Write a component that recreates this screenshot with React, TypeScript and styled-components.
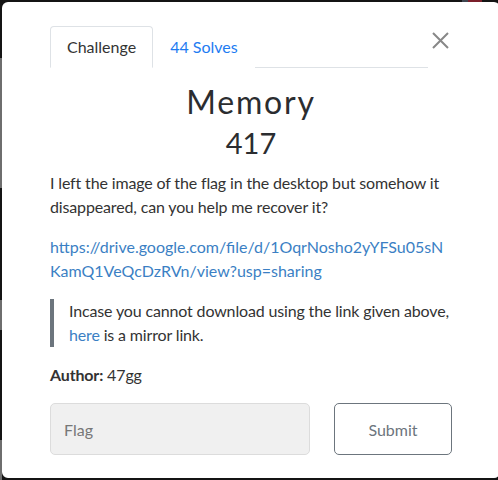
import React from "react";
import styled, { createGlobalStyle } from "styled-components";

const Global = createGlobalStyle`
  html, body { margin: 0; padding: 0; }
  body {
    width: 498px;
    height: 480px;
    overflow: hidden;
    font-family: Lato, "Open Sans", sans-serif;
    color: #212529;
    background:
      linear-gradient(to right, #3e4650 0 6px, #7a1f2a 6px 20px, #141414 20px) 462px 0 / 36px 2px no-repeat,
      linear-gradient(to bottom,
        #141414 0 58px, #6e6e6e 58px 188px, #141414 188px 300px,
        #6e6e6e 300px 330px, #141414 330px 440px, #6e6e6e 440px) 0 0 / 2px 480px no-repeat,
      #141414;
  }
`;

const Stage = styled.div`
  padding: 2px 0 0 2px;
`;

const Modal = styled.div`
  width: 498px;
  height: 476px;
  box-sizing: border-box;
  background: #fff;
  border-radius: 6px;
  padding: 24px 48px 0 48px;
`;

const Header = styled.div`
  display: flex;
  align-items: flex-start;
`;

const Tabs = styled.nav`
  flex: 0 0 378px;
  display: flex;
  border-bottom: 1px solid #dee2e6;
`;

const Tab = styled.a<{ $active?: boolean }>`
  display: block;
  padding: 8px 16px;
  line-height: 24px;
  font-size: 16px;
  margin-bottom: -1px;
  border: 1px solid ${(p) => (p.$active ? "#dee2e6" : "transparent")};
  border-bottom-color: ${(p) => (p.$active ? "#fff" : "transparent")};
  border-radius: 4px 4px 0 0;
  background: #fff;
  color: ${(p) => (p.$active ? "#333" : "#1e7cf2")};
  text-decoration: none;
`;

const Close = styled.button`
  margin: 4px 0 0 2px;
  width: 20px;
  height: 20px;
  padding: 0;
  border: 0;
  background: transparent;
  display: flex;
  align-items: center;
  justify-content: center;
`;

const Title = styled.h2`
  margin: 14px 0 0;
  text-align: center;
  font-size: 32px;
  line-height: 40px;
  font-weight: 400;
  letter-spacing: 1.8px;
  color: #2b2d30;
`;

const Value = styled.h3`
  margin: 4px 0 0;
  text-align: center;
  font-size: 29px;
  line-height: 34px;
  font-weight: 400;
  color: #2b2d30;
`;

const Body = styled.div`
  margin-top: 11px;
  font-size: 16px;
  line-height: 24px;
  letter-spacing: -0.15px;
  color: #333;
`;

const Para = styled.p`
  margin: 0 0 16px;
`;

const Link = styled.a`
  color: #3b7fc4;
  text-decoration: none;
  word-break: break-all;
`;

const UrlLink = styled(Link)`
  letter-spacing: 0;
`;

const Quote = styled.blockquote`
  margin: 0 0 16px;
  padding: 0 0 0 15px;
  border-left: 4px solid #6c757d;
`;

const Author = styled.p`
  margin: 13px 0 0;
  font-size: 16px;
  line-height: 24px;
  letter-spacing: -0.15px;
  color: #333;
  b { font-weight: 700; }
`;

const SubmitRow = styled.div`
  margin-top: 16px;
  display: grid;
  grid-template-columns: 260px 118px;
  column-gap: 24px;
`;

const FlagInput = styled.input`
  box-sizing: border-box;
  height: 52px;
  padding: 0 13px;
  border: 1px solid #dcdcdc;
  border-radius: 5px;
  background: #f0f0f0;
  font-family: Lato, sans-serif;
  font-size: 16px;
  color: #333;
  &::placeholder { color: #777; }
`;

const SubmitButton = styled.button`
  box-sizing: border-box;
  height: 52px;
  border: 1px solid #6c757d;
  border-radius: 5px;
  background: #fff;
  font-family: Lato, sans-serif;
  font-size: 16px;
  color: #6c757d;
`;

export default function App() {
  return (
    <>
      <Global />
      <Stage>
        <Modal>
          <Header>
            <Tabs>
              <Tab $active>Challenge</Tab>
              <Tab>44 Solves</Tab>
            </Tabs>
            <Close aria-label="Close">
              <svg width="17" height="17" viewBox="0 0 17 17">
                <path d="M1 1L16 16M16 1L1 16" stroke="#888" strokeWidth="2" fill="none" />
              </svg>
            </Close>
          </Header>
          <Title>Memory</Title>
          <Value>417</Value>
          <Body>
            <Para>
              I left the image of the flag in the desktop but somehow it disappeared, can you help me recover it?
            </Para>
            <Para>
              <UrlLink>https://drive.google.com/file/d/1OqrNosho2yYFSu05sNKamQ1VeQcDzRVn/view?usp=sharing</UrlLink>
            </Para>
            <Quote>
              Incase you cannot download using the link given above, <Link>here</Link> is a mirror link.
            </Quote>
          </Body>
          <Author>
            <b>Author:</b> 47gg
          </Author>
          <SubmitRow>
            <FlagInput placeholder="Flag" />
            <SubmitButton>Submit</SubmitButton>
          </SubmitRow>
        </Modal>
      </Stage>
    </>
  );
}
